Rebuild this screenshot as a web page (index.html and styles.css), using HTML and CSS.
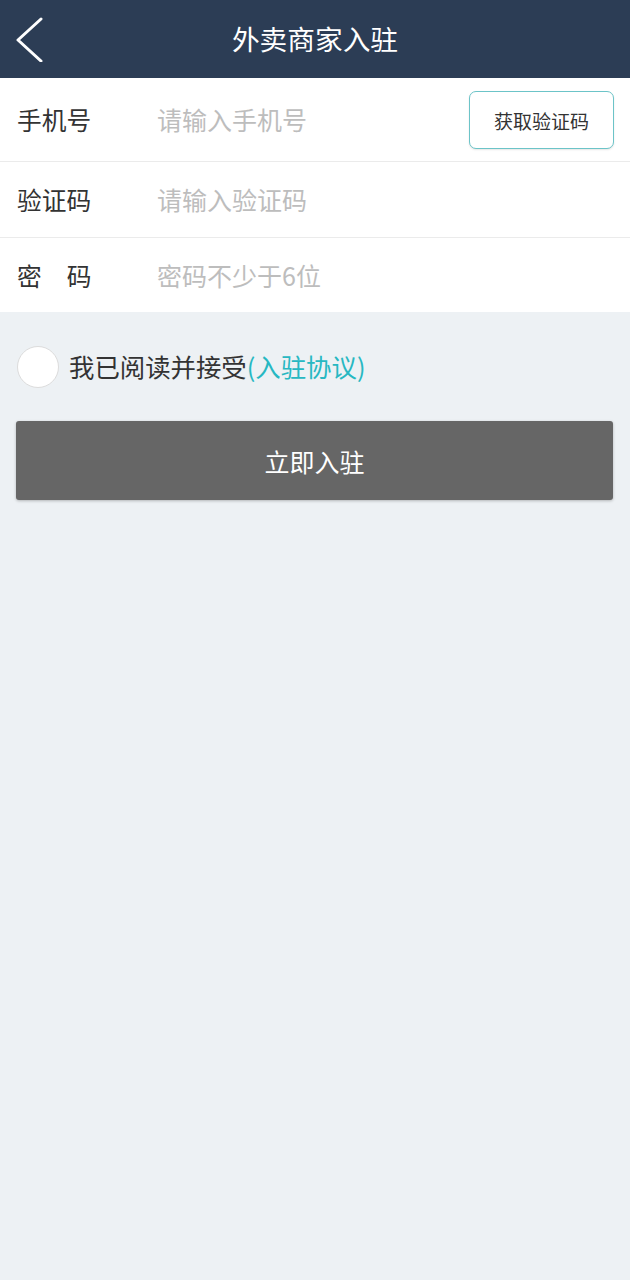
FILE: index.html
```html
<!DOCTYPE html>
<html lang="zh">
<head>
<meta charset="utf-8">
<title>外卖商家入驻</title>
<link rel="stylesheet" href="styles.css">
</head>
<body>
<header class="topbar">
  <svg class="back" width="30" height="46" viewBox="0 0 30 46"><polyline points="26,3 3,24 26,45" fill="none" stroke="#fff" stroke-width="3" stroke-linecap="round" stroke-linejoin="round"/></svg>
  <h1 class="title">外卖商家入驻</h1>
</header>
<section class="form">
  <div class="row row-phone">
    <span class="label">手机号</span>
    <span class="ph">请输入手机号</span>
    <button class="code-btn">获取验证码</button>
  </div>
  <div class="row">
    <span class="label">验证码</span>
    <span class="ph">请输入验证码</span>
  </div>
  <div class="row row-last">
    <span class="label label-spaced">密<span class="gap"></span>码</span>
    <span class="ph">密码不少于6位</span>
  </div>
</section>
<div class="agree">
  <span class="check"></span>
  <span class="agree-text">我已阅读并接受<span class="link">(入驻协议)</span></span>
</div>
<div class="submit-wrap">
  <button class="submit">立即入驻</button>
</div>
</body>
</html>
```
FILE: styles.css
```css
html, body {
  margin: 0;
  padding: 0;
}
body {
  background: #edf1f4;
  font-family: "Noto Sans CJK SC", "Noto Sans", sans-serif;
  width: 630px;
  min-height: 1280px;
}
.topbar {
  height: 78px;
  background: #2c3d55;
  display: flex;
  align-items: center;
  justify-content: center;
  position: relative;
}
.back {
  position: absolute;
  left: 15px;
  top: 16px;
}
.title {
  margin: 0;
  color: #fff;
  font-size: 27.7px;
  font-weight: 400;
  line-height: 1;
}
.form {
  background: #fff;
}
.row {
  height: 75px;
  display: flex;
  align-items: center;
  padding: 0 16px 0 17px;
  border-bottom: 1px solid #ebebeb;
}
.row-phone {
  height: 83px;
}
.row-last {
  border-bottom: none;
  height: 74px;
}
.label {
  width: 140px;
  font-size: 24.7px;
  color: #333;
  line-height: 1;
  display: flex;
}
.gap {
  width: 25px;
}
.ph {
  font-size: 25px;
  color: #bdbdbd;
  line-height: 1;
  flex: 1;
}
.code-btn {
  width: 145px;
  height: 58px;
  border: 1.5px solid #6cc4c8;
  border-radius: 7px;
  background: #fff;
  font-family: inherit;
  font-size: 19px;
  color: #333;
  padding: 0;
  margin-top: 1px;
  box-shadow: 0 1px 2px rgba(0,0,0,0.1);
}
.agree {
  display: flex;
  align-items: center;
  padding: 34px 17px 0 17px;
  gap: 10px;
}
.check {
  width: 40px;
  height: 40px;
  border-radius: 50%;
  background: #fff;
  border: 1px solid #dcdcdc;
}
.agree-text {
  font-size: 25.4px;
  color: #333;
  line-height: 1;
}
.link {
  color: #27b8c2;
}
.submit-wrap {
  padding: 33px 17px 0 16px;
}
.submit {
  width: 100%;
  height: 79px;
  background: #666;
  border: none;
  border-radius: 3px;
  color: #fff;
  font-family: inherit;
  font-size: 25px;
  box-shadow: 0 1px 3px rgba(0,0,0,0.25);
  padding: 0;
}
```
